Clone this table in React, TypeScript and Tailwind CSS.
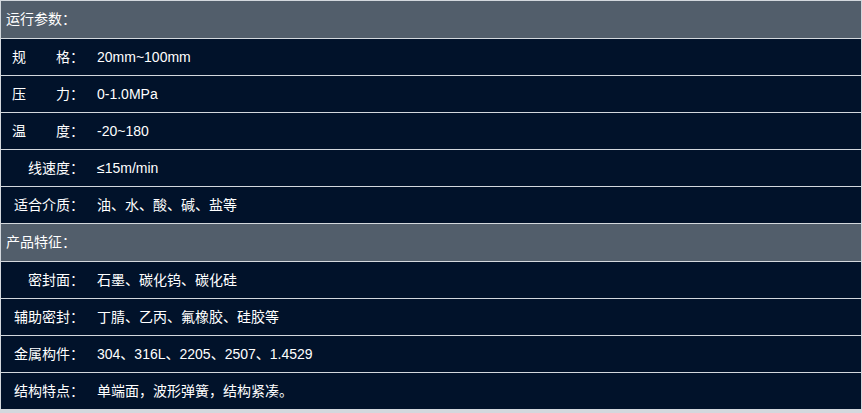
import React from "react";

type Row = { label: React.ReactNode; value: string };

const spaced = (a: string, b: string) => (
  <>
    <span>{a}</span>
    <span className="ml-[30px]">{b}：</span>
  </>
);

const groups: { title: string; rows: Row[] }[] = [
  {
    title: "运行参数：",
    rows: [
      { label: spaced("规", "格"), value: "20mm~100mm" },
      { label: spaced("压", "力"), value: "0-1.0MPa" },
      { label: spaced("温", "度"), value: "-20~180" },
      { label: "线速度：", value: "≤15m/min" },
      { label: "适合介质：", value: "油、水、酸、碱、盐等" },
    ],
  },
  {
    title: "产品特征：",
    rows: [
      { label: "密封面：", value: "石墨、碳化钨、碳化硅" },
      { label: "辅助密封：", value: "丁腈、乙丙、氟橡胶、硅胶等" },
      { label: "金属构件：", value: "304、316L、2205、2507、1.4529" },
      { label: "结构特点：", value: "单端面，波形弹簧，结构紧凑。" },
    ],
  },
];

export default function App() {
  return (
    <div
      className="w-[862px] h-[413px] bg-[#d3d8dd] text-white text-[14px] overflow-hidden"
      style={{ fontFamily: '"Liberation Sans", "Noto Sans CJK SC", sans-serif' }}
    >
      <div className="flex flex-col gap-px pt-px pl-px w-[861px]">
        {groups.map((g) => (
          <React.Fragment key={g.title}>
            <div className="h-[37px] bg-[#525e6b] flex items-center pl-[5px]">{g.title}</div>
            {g.rows.map((r, i) => (
              <div key={i} className="h-[36px] bg-[#01122a] flex items-center">
                <div className="w-[83px] text-right whitespace-nowrap">{r.label}</div>
                <div className="ml-[13px] whitespace-nowrap">{r.value}</div>
              </div>
            ))}
          </React.Fragment>
        ))}
      </div>
    </div>
  );
}
